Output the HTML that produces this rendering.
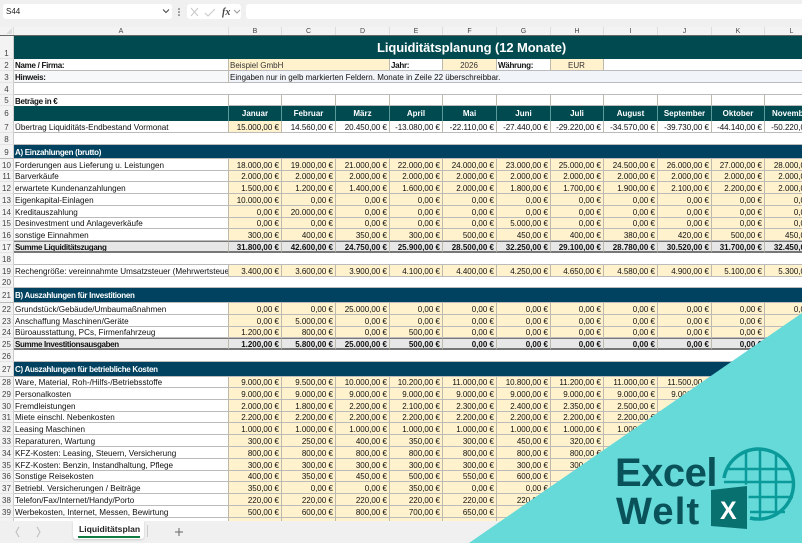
<!DOCTYPE html>
<html lang="de"><head><meta charset="utf-8"><title>Liquiditätsplanung</title>
<style>
html,body{margin:0;padding:0;background:#f0f0f0}
#p{position:relative;width:802px;height:543px;overflow:hidden;background:#f0f0f0;font-family:"Liberation Sans",sans-serif;color:#222}
.b{position:absolute;background:#fff;border-radius:3px;top:4px;height:15px}
#ch{position:absolute;left:0;top:27px;width:802px;height:9px;background:#f3f3f3;border-bottom:1px solid #666;box-sizing:border-box}
#ch span{position:absolute;top:0;height:8px;line-height:9px;font-size:7px;text-align:center;color:#444;border-right:1px solid #ddd;box-sizing:border-box}
#w{position:absolute;left:0;top:36px;width:802px;height:485px;overflow:hidden;background:#fff;filter:blur(.3px)}
table{border-collapse:separate;border-spacing:0;table-layout:fixed;width:819px;font-size:8px}
td{padding:2px 2px 0 1px;box-sizing:border-box;overflow:hidden;white-space:nowrap;text-align:right;line-height:8px;border-right:1px solid #bdb9ac;border-bottom:1px solid #bbb;color:#111}
td:first-child{background:#f3f3f3;text-align:center;color:#444;padding:2px 0 0;border-right:1px solid #ccc;border-bottom:1px solid #e4e4e4;font-size:8px}
td:nth-child(2){text-align:left;padding-left:1px;font-size:8.15px}
tr.y td{background:#fff2cc}
tr.y td:first-child{background:#f3f3f3}
tr.y td:nth-child(2){background:#fff}
tr.s td{background:#e7e7e7;font-weight:bold;border-top:1px solid #777;border-bottom:2px solid #777;padding-top:2px;line-height:7px}
tr.s td:nth-child(2){letter-spacing:-.35px;font-size:8px}
tr.s td:first-child{background:#f3f3f3;font-weight:normal;border-top:0;border-bottom:1px solid #e4e4e4;padding-top:2px;line-height:8px}
tr.e td{border-right-color:#fff}
tr.e td:first-child{border-right-color:#ccc}
tr.h td{background:#00425f;color:#fff;font-weight:bold;text-align:left;border-right:0;border-bottom:1px solid #bbb;padding-left:1px;letter-spacing:-.3px;font-size:8px}
tr.h td:first-child{background:#f3f3f3;color:#444;font-weight:normal;text-align:center;border-right:1px solid #ccc;padding:2px 0 0;letter-spacing:0}
tr.m td{background:#004a50;color:#fff;font-weight:bold;text-align:center;border-right:1px solid #5a9a9a;border-bottom:0;padding:0;line-height:10px}
tr.m td:first-child{background:#f3f3f3;color:#444;font-weight:normal;border-right:1px solid #ccc}
td.l{text-align:left;font-weight:bold;letter-spacing:-.28px;font-size:8px!important}
td.c{text-align:center}
td.g{background:#fff2cc;color:#333;text-align:left}
td.gc{background:#fff2cc;text-align:center;color:#333}
td.n{background:#f1f4f8;text-align:left}
td.t{background:#004a50;color:#fff;font-weight:bold;font-size:13px!important;letter-spacing:-.1px;text-align:left;padding:1px 0 0 363px!important;line-height:10px;border:0}
#tb{position:absolute;left:0;top:521px;width:802px;height:22px;background:#f0f0f0}
svg{position:absolute;left:0;top:0}
</style></head><body><div id="p">
<div class="b" style="left:3px;width:169px"></div>
<div style="position:absolute;left:6px;top:6px;font-size:8px;line-height:11px;color:#222">S44</div>
<div class="b" style="left:187px;width:54px"></div>
<div class="b" style="left:246px;width:560px"></div>
<div id="ch">
<span style="left:0;width:14px"></span>
<span style="left:14px;width:215px">A</span>
<span style="left:229px;width:53px">B</span>
<span style="left:282px;width:54px">C</span>
<span style="left:336px;width:54px">D</span>
<span style="left:390px;width:53px">E</span>
<span style="left:443px;width:54px">F</span>
<span style="left:497px;width:54px">G</span>
<span style="left:551px;width:53px">H</span>
<span style="left:604px;width:54px">I</span>
<span style="left:658px;width:54px">J</span>
<span style="left:712px;width:53px">K</span>
<span style="left:765px;width:54px">L</span>
</div>
<div id="w"><table>
<colgroup><col style="width:14px"><col style="width:215px"><col style="width:53px"><col style="width:54px"><col style="width:54px"><col style="width:53px"><col style="width:54px"><col style="width:54px"><col style="width:53px"><col style="width:54px"><col style="width:54px"><col style="width:53px"><col style="width:54px"></colgroup>
<tr style="height:23px"><td style="vertical-align:bottom">1</td><td class="t" colspan="12">Liquiditätsplanung (12 Monate)</td></tr>
<tr style="height:12px"><td>2</td><td class="l">Name / Firma:</td><td class="g" colspan="3">Beispiel GmbH</td><td class="l">Jahr:</td><td class="gc">2026</td><td class="l">Währung:</td><td class="gc">EUR</td><td colspan="4"></td></tr>
<tr style="height:12px"><td>3</td><td class="l" style="background:#f6f8fa">Hinweis:</td><td class="n" colspan="11">Eingaben nur in gelb markierten Feldern. Monate in Zeile 22 überschreibbar.</td></tr>
<tr class="e" style="height:12px"><td>4</td><td colspan="12"></td></tr>
<tr style="height:11px"><td>5</td><td class="l" style="border-bottom:0">Beträge in €</td><td></td><td></td><td></td><td></td><td></td><td></td><td></td><td></td><td></td><td></td><td></td></tr>
<tr class="m" style="height:15px"><td>6</td><td></td><td>Januar</td><td>Februar</td><td>März</td><td>April</td><td>Mai</td><td>Juni</td><td>Juli</td><td>August</td><td>September</td><td>Oktober</td><td>November</td></tr>
<tr style="height:12px"><td>7</td><td>Übertrag Liquiditäts-Endbestand Vormonat</td><td style="background:#fff2cc">15.000,00 €</td><td>14.560,00 €</td><td>20.450,00 €</td><td>-13.080,00 €</td><td>-22.110,00 €</td><td>-27.440,00 €</td><td>-29.220,00 €</td><td>-34.570,00 €</td><td>-39.730,00 €</td><td>-44.140,00 €</td><td>-50.220,00 €</td></tr>
<tr class="e" style="height:12px"><td>8</td><td colspan="12"></td></tr>
<tr class="h" style="height:14px"><td>9</td><td colspan="12">A) Einzahlungen (brutto)</td></tr>
<tr class="y" style="height:12px"><td>10</td><td>Forderungen aus Lieferung u. Leistungen</td><td>18.000,00 €</td><td>19.000,00 €</td><td>21.000,00 €</td><td>22.000,00 €</td><td>24.000,00 €</td><td>23.000,00 €</td><td>25.000,00 €</td><td>24.500,00 €</td><td>26.000,00 €</td><td>27.000,00 €</td><td>28.000,00 €</td></tr>
<tr class="y" style="height:11px"><td>11</td><td>Barverkäufe</td><td>2.000,00 €</td><td>2.000,00 €</td><td>2.000,00 €</td><td>2.000,00 €</td><td>2.000,00 €</td><td>2.000,00 €</td><td>2.000,00 €</td><td>2.000,00 €</td><td>2.000,00 €</td><td>2.000,00 €</td><td>2.000,00 €</td></tr>
<tr class="y" style="height:12px"><td>12</td><td>erwartete Kundenanzahlungen</td><td>1.500,00 €</td><td>1.200,00 €</td><td>1.400,00 €</td><td>1.600,00 €</td><td>2.000,00 €</td><td>1.800,00 €</td><td>1.700,00 €</td><td>1.900,00 €</td><td>2.100,00 €</td><td>2.200,00 €</td><td>2.000,00 €</td></tr>
<tr class="y" style="height:12px"><td>13</td><td>Eigenkapital-Einlagen</td><td>10.000,00 €</td><td>0,00 €</td><td>0,00 €</td><td>0,00 €</td><td>0,00 €</td><td>0,00 €</td><td>0,00 €</td><td>0,00 €</td><td>0,00 €</td><td>0,00 €</td><td>0,00 €</td></tr>
<tr class="y" style="height:12px"><td>14</td><td>Kreditauszahlung</td><td>0,00 €</td><td>20.000,00 €</td><td>0,00 €</td><td>0,00 €</td><td>0,00 €</td><td>0,00 €</td><td>0,00 €</td><td>0,00 €</td><td>0,00 €</td><td>0,00 €</td><td>0,00 €</td></tr>
<tr class="y" style="height:11px"><td>15</td><td>Desinvestment und Anlageverkäufe</td><td>0,00 €</td><td>0,00 €</td><td>0,00 €</td><td>0,00 €</td><td>0,00 €</td><td>5.000,00 €</td><td>0,00 €</td><td>0,00 €</td><td>0,00 €</td><td>0,00 €</td><td>0,00 €</td></tr>
<tr class="y" style="height:12px"><td>16</td><td>sonstige Einnahmen</td><td>300,00 €</td><td>400,00 €</td><td>350,00 €</td><td>300,00 €</td><td>500,00 €</td><td>450,00 €</td><td>400,00 €</td><td>380,00 €</td><td>420,00 €</td><td>500,00 €</td><td>450,00 €</td></tr>
<tr class="s" style="height:12px"><td>17</td><td>Summe Liquiditätszugang</td><td>31.800,00 €</td><td>42.600,00 €</td><td>24.750,00 €</td><td>25.900,00 €</td><td>28.500,00 €</td><td>32.250,00 €</td><td>29.100,00 €</td><td>28.780,00 €</td><td>30.520,00 €</td><td>31.700,00 €</td><td>32.450,00 €</td></tr>
<tr class="e" style="height:12px"><td>18</td><td colspan="12"></td></tr>
<tr class="y" style="height:12px"><td>19</td><td>Rechengröße: vereinnahmte Umsatzsteuer (Mehrwertsteuer)</td><td>3.400,00 €</td><td>3.600,00 €</td><td>3.900,00 €</td><td>4.100,00 €</td><td>4.400,00 €</td><td>4.250,00 €</td><td>4.650,00 €</td><td>4.580,00 €</td><td>4.900,00 €</td><td>5.100,00 €</td><td>5.300,00 €</td></tr>
<tr class="e" style="height:11px"><td>20</td><td colspan="12"></td></tr>
<tr class="h" style="height:15px"><td>21</td><td colspan="12">B) Auszahlungen für Investitionen</td></tr>
<tr class="y" style="height:12px"><td>22</td><td>Grundstück/Gebäude/Umbaumaßnahmen</td><td>0,00 €</td><td>0,00 €</td><td>25.000,00 €</td><td>0,00 €</td><td>0,00 €</td><td>0,00 €</td><td>0,00 €</td><td>0,00 €</td><td>0,00 €</td><td>0,00 €</td><td>0,00 €</td></tr>
<tr class="y" style="height:12px"><td>23</td><td>Anschaffung Maschinen/Geräte</td><td>0,00 €</td><td>5.000,00 €</td><td>0,00 €</td><td>0,00 €</td><td>0,00 €</td><td>0,00 €</td><td>0,00 €</td><td>0,00 €</td><td>0,00 €</td><td>0,00 €</td><td>0,00 €</td></tr>
<tr class="y" style="height:11px"><td>24</td><td>Büroausstattung, PCs, Firmenfahrzeug</td><td>1.200,00 €</td><td>800,00 €</td><td>0,00 €</td><td>500,00 €</td><td>0,00 €</td><td>0,00 €</td><td>0,00 €</td><td>0,00 €</td><td>0,00 €</td><td>0,00 €</td><td>0,00 €</td></tr>
<tr class="s" style="height:12px"><td>25</td><td>Summe Investitionsausgaben</td><td>1.200,00 €</td><td>5.800,00 €</td><td>25.000,00 €</td><td>500,00 €</td><td>0,00 €</td><td>0,00 €</td><td>0,00 €</td><td>0,00 €</td><td>0,00 €</td><td>0,00 €</td><td>0,00 €</td></tr>
<tr class="e" style="height:12px"><td>26</td><td colspan="12"></td></tr>
<tr class="h" style="height:15px"><td>27</td><td colspan="12">C) Auszahlungen für betriebliche Kosten</td></tr>
<tr class="y" style="height:11px"><td>28</td><td>Ware, Material, Roh-/Hilfs-/Betriebsstoffe</td><td>9.000,00 €</td><td>9.500,00 €</td><td>10.000,00 €</td><td>10.200,00 €</td><td>11.000,00 €</td><td>10.800,00 €</td><td>11.200,00 €</td><td>11.000,00 €</td><td>11.500,00 €</td><td>12.000,00 €</td><td>12.000,00 €</td></tr>
<tr class="y" style="height:12px"><td>29</td><td>Personalkosten</td><td>9.000,00 €</td><td>9.000,00 €</td><td>9.000,00 €</td><td>9.000,00 €</td><td>9.000,00 €</td><td>9.000,00 €</td><td>9.000,00 €</td><td>9.000,00 €</td><td>9.000,00 €</td><td>9.000,00 €</td><td>9.000,00 €</td></tr>
<tr class="y" style="height:12px"><td>30</td><td>Fremdleistungen</td><td>2.000,00 €</td><td>1.800,00 €</td><td>2.200,00 €</td><td>2.100,00 €</td><td>2.300,00 €</td><td>2.400,00 €</td><td>2.350,00 €</td><td>2.500,00 €</td><td></td><td></td><td></td></tr>
<tr class="y" style="height:11px"><td>31</td><td>Miete einschl. Nebenkosten</td><td>2.200,00 €</td><td>2.200,00 €</td><td>2.200,00 €</td><td>2.200,00 €</td><td>2.200,00 €</td><td>2.200,00 €</td><td>2.200,00 €</td><td>2.200,00 €</td><td></td><td></td><td></td></tr>
<tr class="y" style="height:12px"><td>32</td><td>Leasing Maschinen</td><td>1.000,00 €</td><td>1.000,00 €</td><td>1.000,00 €</td><td>1.000,00 €</td><td>1.000,00 €</td><td>1.000,00 €</td><td>1.000,00 €</td><td>1.000,00 €</td><td></td><td></td><td></td></tr>
<tr class="y" style="height:12px"><td>33</td><td>Reparaturen, Wartung</td><td>300,00 €</td><td>250,00 €</td><td>400,00 €</td><td>350,00 €</td><td>300,00 €</td><td>450,00 €</td><td>320,00 €</td><td></td><td></td><td></td><td></td></tr>
<tr class="y" style="height:12px"><td>34</td><td>KFZ-Kosten: Leasing, Steuern, Versicherung</td><td>800,00 €</td><td>800,00 €</td><td>800,00 €</td><td>800,00 €</td><td>800,00 €</td><td>800,00 €</td><td>800,00 €</td><td></td><td></td><td></td><td></td></tr>
<tr class="y" style="height:12px"><td>35</td><td>KFZ-Kosten: Benzin, Instandhaltung, Pflege</td><td>300,00 €</td><td>300,00 €</td><td>300,00 €</td><td>300,00 €</td><td>300,00 €</td><td>300,00 €</td><td>300,00 €</td><td></td><td></td><td></td><td></td></tr>
<tr class="y" style="height:11px"><td>36</td><td>Sonstige Reisekosten</td><td>400,00 €</td><td>350,00 €</td><td>450,00 €</td><td>500,00 €</td><td>550,00 €</td><td>600,00 €</td><td></td><td></td><td></td><td></td><td></td></tr>
<tr class="y" style="height:12px"><td>37</td><td>Betriebl. Versicherungen / Beiträge</td><td>350,00 €</td><td>0,00 €</td><td>0,00 €</td><td>350,00 €</td><td>0,00 €</td><td>0,00 €</td><td></td><td></td><td></td><td></td><td></td></tr>
<tr class="y" style="height:12px"><td>38</td><td>Telefon/Fax/Internet/Handy/Porto</td><td>220,00 €</td><td>220,00 €</td><td>220,00 €</td><td>220,00 €</td><td>220,00 €</td><td>220,00 €</td><td></td><td></td><td></td><td></td><td></td></tr>
<tr class="y" style="height:12px"><td>39</td><td>Werbekosten, Internet, Messen, Bewirtung</td><td>500,00 €</td><td>600,00 €</td><td>800,00 €</td><td>700,00 €</td><td>650,00 €</td><td></td><td></td><td></td><td></td><td></td><td></td></tr>
<tr class="y" style="height:12px"><td>40</td><td>Rechts- und Steuerberatungskosten</td><td></td><td></td><td></td><td></td><td></td><td></td><td></td><td></td><td></td><td></td><td></td></tr>
</table></div>
<div id="tb">
<div style="position:absolute;left:73px;top:0;width:71px;height:18px;background:#fff;border-radius:0 0 3px 3px;box-shadow:0 1px 2px #ccc"></div>
<div style="position:absolute;left:79px;top:3px;font-size:8.6px;font-weight:bold;line-height:11px;color:#222">Liquiditätsplan</div>
<div style="position:absolute;left:78px;top:15px;width:62px;height:2px;background:#107c41"></div>
<div style="position:absolute;left:147px;top:4px;width:1px;height:12px;background:#ccc"></div>
</div>
<svg width="802" height="543" viewBox="0 0 802 543" fill="none">
<path d="M163 9.5l3 3 3-3" stroke="#444" stroke-width="1"/>
<circle cx="179" cy="9" r=".8" fill="#444"/><circle cx="179" cy="12" r=".8" fill="#444"/><circle cx="179" cy="15" r=".8" fill="#444"/>
<path d="M191 8l7 8M198 8l-7 8" stroke="#c8c8c8"/>
<path d="M205 13l3 3 7-7" stroke="#c8c8c8"/>
<text x="222" y="15" font-family="Liberation Serif,serif" font-style="italic" font-weight="bold" font-size="10" fill="#444">fx</text>
<path d="M234 10l3 3 3-3" stroke="#999"/>
<path d="M12 34V28L6 34Z" fill="#ddd"/>
<path d="M19 527l-3 5 3 5" stroke="#bbb" stroke-width="1"/>
<path d="M37 527l3 5-3 5" stroke="#bbb" stroke-width="1"/>
<path d="M179 528v8M175 532h8" stroke="#666" stroke-width="1"/>
<polygon points="802,313 802,543 469,543" fill="#66d9d9"/>
<path d="M724 478A35 35 0 1 1 750 518" stroke="#0a9a9a" stroke-width="3.5"/>
<path d="M746 452V486M760 450V518M776 453V515M728 469H790M724 482H793M747 497H793M750 512H785" stroke="#0a9a9a" stroke-width="2.5"/>
<polygon points="711,490 747,486 747,529 711,526" fill="#08706f" stroke="#66d9d9" stroke-width="3" paint-order="stroke"/>
<text x="720" y="519" font-family="Liberation Sans,sans-serif" font-weight="bold" font-size="25" fill="#fff">X</text>
<text x="615" y="486" font-family="Liberation Sans,sans-serif" font-weight="bold" font-size="40" letter-spacing="-.5" fill="#0a525a">Excel</text>
<text x="616" y="524" font-family="Liberation Sans,sans-serif" font-weight="bold" font-size="38" letter-spacing="1.2" fill="#0a525a">Welt</text>
</svg>
</div></body></html>
